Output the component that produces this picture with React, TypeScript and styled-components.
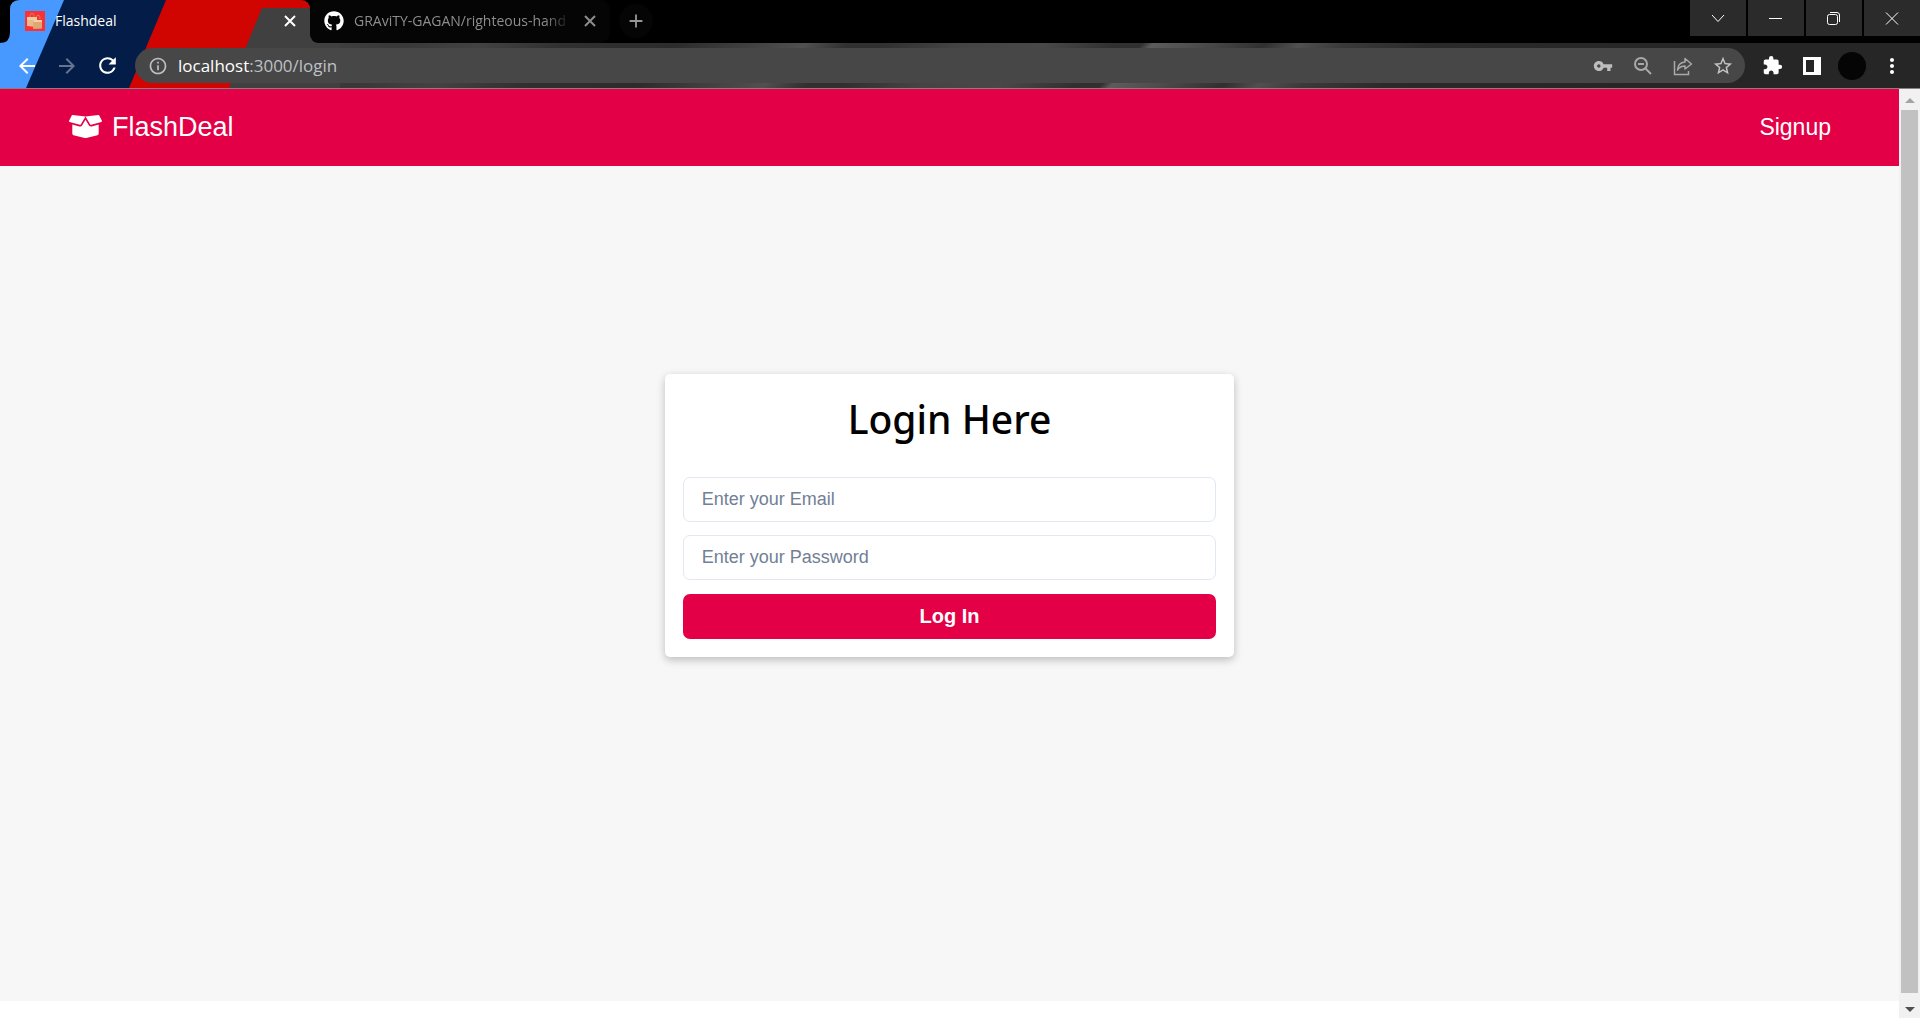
import React, { useState } from "react";
import styled, { createGlobalStyle } from "styled-components";
import {
  MdAdd,
  MdArrowBack,
  MdArrowForward,
  MdExtension,
  MdInfoOutline,
  MdMoreVert,
  MdRefresh,
  MdStarBorder,
  MdVpnKey,
} from "react-icons/md";
import { FaBoxOpen, FaGithub } from "react-icons/fa";

const brand = "#e40046";
const systemFont = '"Open Sans", "Noto Sans", sans-serif';
const titleFont = '"Noto Sans", "Open Sans", sans-serif';
const bodyFont = '"Liberation Sans", Arial, sans-serif';

const GlobalStyle = createGlobalStyle`
  *, *::before, *::after { box-sizing: border-box; }
  body { margin: 0; background: #fff; font-family: ${bodyFont}; }
  button, input { font: inherit; }
  button { margin: 0; padding: 0; border: 0; background: none; color: inherit; cursor: pointer; }
  svg { display: block; flex: none; }
`;

const Window = styled.div`
  display: flex;
  flex-direction: column;
  height: 100vh;
  overflow: hidden;
`;

/* ---------- browser frame ---------- */

const Chrome = styled.header`
  position: relative;
  flex: none;
  background: #000;
  border-bottom: 1px solid #8a8080;
  font-family: ${systemFont};
  color: #fff;
`;

const ThemeArt = styled.svg`
  position: absolute;
  left: 0;
  top: 0;
`;

const TabStrip = styled.div`
  display: flex;
  height: 43px;
  padding-left: 10px;
`;

const Tab = styled.div<{ $active?: boolean }>`
  position: relative;
  display: flex;
  align-items: center;
  gap: 10px;
  width: 300px;
  padding: 0 11px 2px ${(p) => (p.$active ? 15 : 14)}px;
  border-radius: ${(p) => (p.$active ? "0" : "10px")};
  background: ${(p) => (p.$active ? "transparent" : "#050505")};
  color: ${(p) => (p.$active ? "#fff" : "#8d8d8d")};
`;

const TabTitle = styled.span<{ $faded?: boolean }>`
  flex: 1;
  min-width: 0;
  overflow: hidden;
  white-space: nowrap;
  font-size: 14px;
  line-height: 20px;
  ${(p) => p.$faded && "mask-image: linear-gradient(to right, #000 88%, transparent);"}
`;

const TabClose = styled.button`
  display: grid;
  place-items: center;
  width: 18px;
  height: 18px;
`;

const NewTab = styled.button`
  display: grid;
  place-items: center;
  width: 34px;
  height: 34px;
  margin: 4px 0 0 9px;
  border-radius: 50%;
  background: #050505;
  color: #969696;
`;

const WindowControls = styled.div`
  display: flex;
  gap: 2px;
  height: 36px;
  margin-left: auto;
`;

const WindowButton = styled.button`
  display: grid;
  place-items: center;
  width: 56px;
  background: #2b2b2b;
`;

const Toolbar = styled.div`
  display: flex;
  align-items: center;
  height: 45px;
  padding: 0 16px;
  background: linear-gradient(
    135deg,
    #404040 0,
    #404040 226px,
    #383838 280px,
    #424242 340px,
    #303030 400px,
    #2c2c2c 480px,
    #505050 570px,
    #303030 600px,
    #303030 626px,
    #444 680px,
    #484848 740px,
    #303030 790px,
    #303030 808px,
    #5c5c5c 816px,
    #4c4c4c 850px,
    #303030 895px,
    #505050 920px,
    #3a3a3a 950px,
    #2a2a2a 1010px,
    #262626 1200px
  );
`;

const ToolButton = styled.button<{ $color?: string }>`
  display: grid;
  place-items: center;
  width: 40px;
  height: 34px;
  color: ${(p) => p.$color ?? "#fff"};
`;

const NavButtons = styled.div`
  position: relative;
  display: flex;
  margin: 0 8px 0 -9px;
`;

const AddressBar = styled.div`
  position: relative;
  display: flex;
  flex: 1;
  align-items: center;
  height: 35px;
  padding: 0 2px 0 13px;
  border-radius: 18px;
  background: #474747;
  color: #bdc1c6;
`;

const Address = styled.div`
  flex: 1;
  margin-left: 10px;
  font-size: 17px;
  line-height: 24px;
  white-space: nowrap;
  b {
    font-weight: 400;
    color: #fff;
  }
`;

const Avatar = styled.span`
  width: 28px;
  height: 28px;
  border-radius: 50%;
  background: #050505;
`;

const ToolGroup = styled.div`
  display: flex;
  margin: 0 -8px 0 7px;
`;

/* ---------- page ---------- */

const Viewport = styled.div`
  display: flex;
  flex: 1;
  min-height: 0;
`;

const Page = styled.div`
  display: flex;
  flex: 1;
  flex-direction: column;
  padding-bottom: 17px;
`;

const Navbar = styled.nav`
  display: flex;
  align-items: center;
  justify-content: space-between;
  height: 77px;
  padding: 0 68px 2px 69px;
  background: ${brand};
`;

const NavLink = styled.a<{ $size: number }>`
  display: flex;
  align-items: center;
  gap: 10px;
  font-size: ${(p) => p.$size}px;
  line-height: 32px;
  color: #fff;
  text-decoration: none;
`;

const Main = styled.main`
  display: flex;
  flex: 1;
  flex-direction: column;
  align-items: center;
  justify-content: center;
  padding-bottom: 136px;
  background: #f7f7f7;
`;

const LoginCard = styled.form`
  display: flex;
  flex-direction: column;
  gap: 13px;
  width: 30%;
  min-width: 320px;
  padding: 18px;
  border-radius: 5px;
  background: #fff;
  box-shadow: 0 3px 8px rgba(0, 0, 0, 0.24);
`;

const Title = styled.h1`
  margin: 0 0 18px;
  font-family: ${titleFont};
  font-size: 39px;
  font-weight: 500;
  line-height: 54px;
  text-align: center;
  color: #000;
`;

const TextInput = styled.input`
  width: 100%;
  height: 45px;
  padding: 0 18px;
  border: 1px solid #e2e8f0;
  border-radius: 7px;
  outline: none;
  background: #fff;
  font-size: 18px;
  color: #1a202c;
  &::placeholder {
    color: #718096;
    opacity: 1;
  }
`;

const SubmitButton = styled.button`
  height: 45px;
  margin-top: 1px;
  border-radius: 7px;
  background: ${brand};
  font-size: 20px;
  font-weight: 700;
  color: #fff;
`;

const ScrollTrack = styled.div`
  display: flex;
  flex-direction: column;
  align-items: center;
  width: 21px;
  background: #f1f1f1;
`;

const ScrollThumb = styled.div`
  flex: 1;
  width: 17px;
  background: #c1c1c1;
`;

const ScrollArrow = styled.button<{ $tall?: boolean }>`
  display: grid;
  place-items: center;
  width: 21px;
  height: ${(p) => (p.$tall ? 25 : 21)}px;
  padding-top: ${(p) => (p.$tall ? 8 : 2)}px;
`;

const CloseIcon = () => (
  <svg width="12" height="12" viewBox="0 0 12 12" stroke="currentColor" strokeWidth="2">
    <path d="M1 1l10 10M11 1L1 11" />
  </svg>
);

const ShoppingIcon = () => (
  <svg width="20" height="20" viewBox="0 0 20 20">
    <rect width="20" height="20" fill="#ff3035" />
    <path d="M5 7V4.500a2 2 0 0 1 4 0V7M11.500 8V6a1.700 1.700 0 0 1 3.400 0v2" fill="none" stroke="#b98a60" />
    <path d="M2 6h10v10l-10-1z" fill="#e8b98a" />
    <path d="M2 6h10v3H2z" fill="#f3cb9e" />
    <path d="M8.500 9H17v8.500l-9 .5z" fill="#dda874" />
    <path d="M8.500 9H17v2H8.500z" fill="#f6cfa2" />
  </svg>
);

const ThemeStripes = () => (
  <ThemeArt width="340" height="88" viewBox="0 0 340 88" aria-hidden="true">
    <clipPath id="frame">
      <path d="M0 43Q10 43 10 33V10Q10 0 20 0H300Q310 0 310 10V33Q310 43 320 43H340V88H0Z" />
    </clipPath>
    <g clipPath="url(#frame)">
      <path d="M0 0H340V88H0Z" fill="#404040" />
      <path d="M160 0H340V8H262L229 88H120Z" fill="#d00502" />
      <path d="M60 0H166L129 88H20Z" fill="#031c48" />
      <path d="M0 0H64L26 88H0Z" fill="#4799ff" />
    </g>
  </ThemeArt>
);

const ZoomOutIcon = () => (
  <svg width="20" height="20" viewBox="0 0 20 20" fill="none" stroke="currentColor" strokeWidth="2">
    <circle cx="8" cy="8" r="6" />
    <path d="M12.500 12.500L18 18M5 8h6" />
  </svg>
);

const ShareIcon = () => (
  <svg width="20" height="20" viewBox="0 0 20 20" fill="none" stroke="currentColor" strokeWidth="1.5">
    <path d="M1.500 5v13.500h14V15" />
    <path d="M12 2.500l6.500 5.500L12 13v-3Q7 10 4.500 14 5 6.500 12 6z" strokeLinejoin="round" />
  </svg>
);

const SidePanelIcon = () => (
  <svg width="18" height="18" viewBox="0 0 18 18">
    <path d="M0 0h18v18H0z" fill="#fff" />
    <path d="M3 3h8v12H3z" fill="#252525" />
  </svg>
);

const windowGlyphs = [
  { name: "Search tabs", d: "M1 4l6 6.500L13 4" },
  { name: "Minimize", d: "M0 7.500h13" },
  { name: "Restore", d: "M2.500 3.500h6q2 0 2 2v6q0 2-2 2h-6q-2 0-2-2v-6q0-2 2-2zM3 1.500h7q2.500 0 2.500 2.500v7" },
  { name: "Close window", d: "M1 1.500l12 12M13 1.500l-12 12" },
];

const Browser = () => (
  <Chrome>
    <TabStrip>
      <ThemeStripes />
      <Tab $active>
        <ShoppingIcon />
        <TabTitle>Flashdeal</TabTitle>
        <TabClose aria-label="Close Flashdeal tab">
          <CloseIcon />
        </TabClose>
      </Tab>
      <Tab>
        <FaGithub size={20} color="#fff" />
        <TabTitle $faded>GRAviTY-GAGAN/righteous-hand</TabTitle>
        <TabClose aria-label="Close GitHub tab">
          <CloseIcon />
        </TabClose>
      </Tab>
      <NewTab aria-label="New tab">
        <MdAdd size={22} />
      </NewTab>
      <WindowControls>
        {windowGlyphs.map((glyph) => (
          <WindowButton key={glyph.name} aria-label={glyph.name}>
            <svg width="14" height="15" viewBox="0 0 14 15" fill="none" stroke="#fff">
              <path d={glyph.d} />
            </svg>
          </WindowButton>
        ))}
      </WindowControls>
    </TabStrip>
    <Toolbar>
      <NavButtons>
        <ToolButton aria-label="Back">
          <MdArrowBack size={24} />
        </ToolButton>
        <ToolButton aria-label="Forward" $color="#66758f">
          <MdArrowForward size={24} />
        </ToolButton>
        <ToolButton aria-label="Reload">
          <MdRefresh size={25} />
        </ToolButton>
      </NavButtons>
      <AddressBar>
        <MdInfoOutline size={20} />
        <Address role="textbox" aria-label="Address">
          <b>localhost</b>:3000/login
        </Address>
        <ToolButton aria-label="Saved passwords" $color="#bdbdbd">
          <MdVpnKey size={20} />
        </ToolButton>
        <ToolButton aria-label="Zoom" $color="#a9a9a9">
          <ZoomOutIcon />
        </ToolButton>
        <ToolButton aria-label="Share" $color="#a9a9a9">
          <ShareIcon />
        </ToolButton>
        <ToolButton aria-label="Bookmark" $color="#c4c4c4">
          <MdStarBorder size={22} />
        </ToolButton>
      </AddressBar>
      <ToolGroup>
        <ToolButton aria-label="Extensions">
          <MdExtension size={21} />
        </ToolButton>
        <ToolButton aria-label="Side panel">
          <SidePanelIcon />
        </ToolButton>
        <ToolButton aria-label="Profile">
          <Avatar />
        </ToolButton>
        <ToolButton aria-label="Menu">
          <MdMoreVert size={24} />
        </ToolButton>
      </ToolGroup>
    </Toolbar>
  </Chrome>
);

const Scrollbar = () => (
  <ScrollTrack>
    <ScrollArrow aria-label="Scroll up">
      <svg width="10" height="5" viewBox="0 0 10 5">
        <path d="M0 5L5 0l5 5z" fill="#a3a3a3" />
      </svg>
    </ScrollArrow>
    <ScrollThumb />
    <ScrollArrow $tall aria-label="Scroll down">
      <svg width="10" height="5" viewBox="0 0 10 5">
        <path d="M0 0l5 5 5-5z" fill="#505050" />
      </svg>
    </ScrollArrow>
  </ScrollTrack>
);

export default function App() {
  const [email, setEmail] = useState("");
  const [password, setPassword] = useState("");

  return (
    <Window>
      <GlobalStyle />
      <Browser />
      <Viewport>
        <Page>
          <Navbar>
            <NavLink href="#home" $size={27}>
              <FaBoxOpen size={33} />
              FlashDeal
            </NavLink>
            <NavLink href="#signup" $size={23}>
              Signup
            </NavLink>
          </Navbar>
          <Main>
            <LoginCard onSubmit={(e) => e.preventDefault()}>
              <Title>Login Here</Title>
              <TextInput
                type="email"
                aria-label="Email"
                placeholder="Enter your Email"
                value={email}
                onChange={(e) => setEmail(e.target.value)}
              />
              <TextInput
                type="password"
                aria-label="Password"
                placeholder="Enter your Password"
                value={password}
                onChange={(e) => setPassword(e.target.value)}
              />
              <SubmitButton type="submit">Log In</SubmitButton>
            </LoginCard>
          </Main>
        </Page>
        <Scrollbar />
      </Viewport>
    </Window>
  );
}
